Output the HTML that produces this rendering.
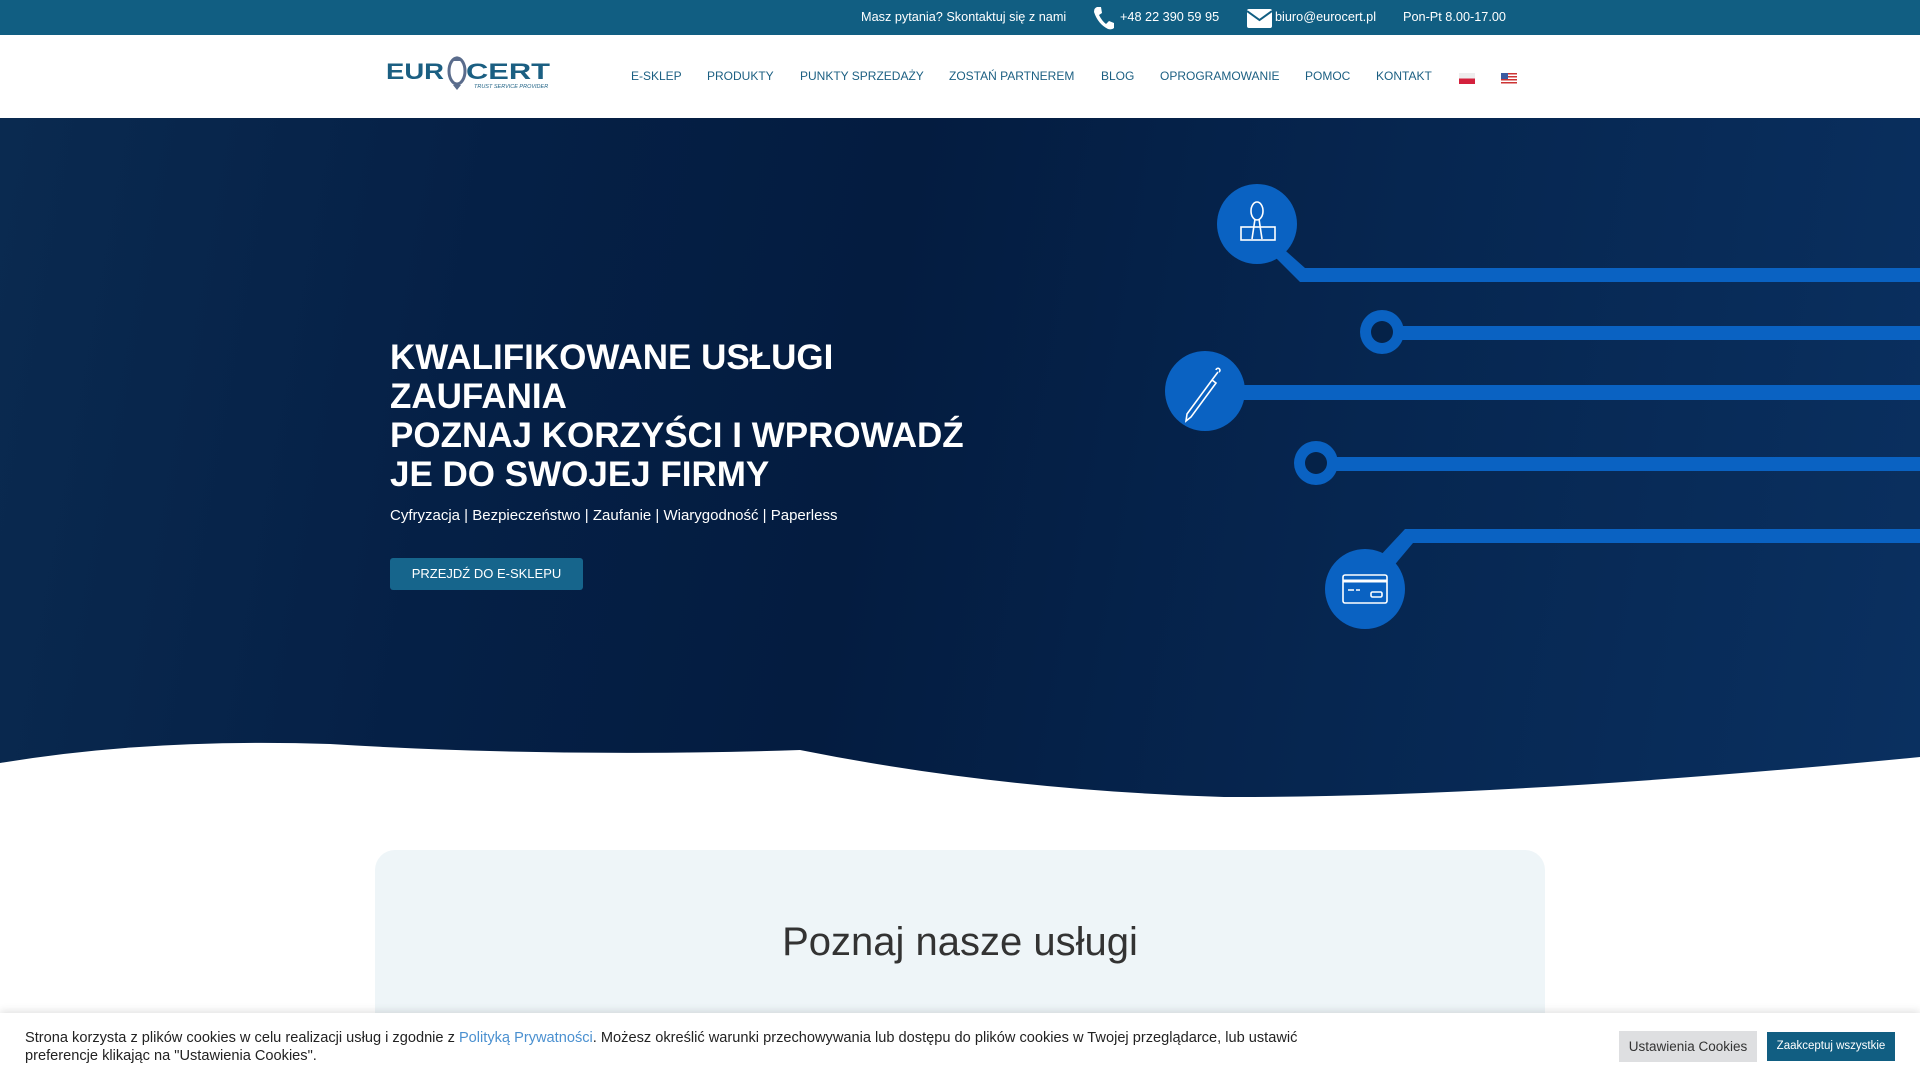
<!DOCTYPE html>
<html><head><meta charset="utf-8"><style>
*{margin:0;padding:0;box-sizing:border-box}
html,body{width:1920px;height:1080px;overflow:hidden}
body{position:relative;font-family:"Liberation Sans",Arial,sans-serif;background:#fff}
.top{position:absolute;left:0;top:0;width:1920px;height:35px;background:#115e82;color:#fff;font-size:12.7px}
.top span{position:absolute;top:10px}
.hdr{position:absolute;left:0;top:35px;width:1920px;height:83px;background:#fff}
.nav a{position:absolute;top:34px;font-size:12px;color:#1b5f82;text-decoration:none}
.hero{position:absolute;left:0;top:118px;width:1920px;height:680px;overflow:hidden;background:linear-gradient(100deg,#0a2a50 0%,#052046 25%,#041c40 45%,#062650 70%,#0a3060 100%)}
h1{position:absolute;left:390px;top:220px;width:620px;color:#fff;font-size:35px;line-height:39px;font-weight:bold}
.sub{position:absolute;left:390px;top:507px;color:#fff;font-size:15px}
.btn{position:absolute;left:390px;top:558px;width:193px;height:32px;background:#16658c;color:#fff;font-size:13px;border-radius:3px;text-align:center;line-height:32px}
.card{position:absolute;left:375px;top:850px;width:1170px;height:230px;background:#eef5f8;border-radius:20px 20px 0 0}
.card h2{text-align:center;font-weight:normal;font-size:40px;color:#333;margin-top:70px}
.cookie{position:absolute;left:0;top:1013px;width:1920px;height:67px;background:#fff;box-shadow:0 -2px 8px rgba(0,0,0,.12);font-size:14.6px;color:#222}
.cookie p{position:absolute;left:25px;top:16px;width:1330px;line-height:18px}
.b1{position:absolute;left:1619px;top:18px;width:138px;height:31px;background:#dedfe1;color:#333;font-size:13.5px;text-align:center;line-height:31px}
.b2{position:absolute;left:1767px;top:19px;width:128px;height:29px;background:#115e82;color:#fff;font-size:11.5px;text-align:center;line-height:29px}
</style></head><body>
<div class="top">
<span style="left:861px">Masz pytania? Skontaktuj się z nami</span>
<svg style="position:absolute;left:1093px;top:6px" width="22" height="24" viewBox="0 0 22 24"><path d="M4 1 L8 1 L9 7 L6 9 Q9 15 13 18 L16 15 L21 17 L21 22 Q19 24 15 23 Q5 18 1 6 Q1 2 4 1Z" fill="#fff"/></svg>
<span style="left:1120px">+48 22 390 59 95</span>
<svg style="position:absolute;left:1247px;top:9px" width="25" height="19" viewBox="0 0 25 19"><rect x="0" y="0" width="25" height="19" rx="2" fill="#fff"/><path d="M0 2 L12.5 11 L25 2" stroke="#115e82" stroke-width="2" fill="none"/></svg>
<span style="left:1275px">biuro@eurocert.pl</span>
<span style="left:1403px">Pon-Pt 8.00-17.00</span>
</div>
<div class="hdr">
<svg style="position:absolute;left:386px;top:19px" width="166" height="38" viewBox="0 0 166 38">
<g fill="#1b5f82" font-family="Liberation Sans" font-weight="bold">
<text x="0" y="25" font-size="22" textLength="58" lengthAdjust="spacingAndGlyphs">EUR</text>
<text x="80" y="25" font-size="22" textLength="84" lengthAdjust="spacingAndGlyphs">CERT</text>
</g>
<ellipse cx="71" cy="17" rx="8" ry="13" fill="none" stroke="#5a6c8c" stroke-width="3"/>
<path d="M71 2 L75 7 L67 7Z M71 36 L75 31 L67 31Z" fill="#5a6c8c"/>
<text x="88" y="34" font-size="5.5" fill="#1b5f82" font-style="italic">TRUST SERVICE PROVIDER</text>
</svg>
<div class="nav">
<a style="left:631px">E-SKLEP</a><a style="left:707px">PRODUKTY</a><a style="left:800px">PUNKTY SPRZEDAŻY</a><a style="left:949px">ZOSTAŃ PARTNEREM</a><a style="left:1101px">BLOG</a><a style="left:1160px">OPROGRAMOWANIE</a><a style="left:1305px">POMOC</a><a style="left:1376px">KONTAKT</a>
</div>
<div style="position:absolute;left:1459px;top:38px;width:16px;height:11px;background:linear-gradient(#eee 50%,#d4213d 50%)"></div>
<div style="position:absolute;left:1501px;top:38px;width:16px;height:11px;background:repeating-linear-gradient(#c33 0 1.5px,#fff 1.5px 3px)"><div style="width:7px;height:6px;background:#3b5aa0"></div></div>
</div>
<div class="hero">
<svg width="1920" height="680" style="position:absolute;left:0;top:0">
<g fill="#0a62c2" stroke="none">
<circle cx="1257" cy="106" r="40"/>
<path d="M1278 126 L1305 150 L1920 150 L1920 164 L1300 164 L1270 134Z"/>
<circle cx="1382" cy="214" r="22"/>
<rect x="1395" y="208" width="525" height="14"/>
<circle cx="1205" cy="273" r="40"/>
<rect x="1240" y="267" width="680" height="15"/>
<circle cx="1316" cy="345" r="22"/>
<rect x="1330" y="339" width="590" height="14"/>
<circle cx="1365" cy="471" r="40"/>
<path d="M1378 440 L1405 411 L1920 411 L1920 425 L1413 425 L1392 450Z"/>
</g>
<circle cx="1382" cy="214" r="11" fill="#052248"/>
<circle cx="1316" cy="345" r="11" fill="#052248"/>
<g fill="none" stroke="#fff" stroke-width="1.6">
<ellipse cx="1257" cy="93" rx="6" ry="9"/><path d="M1255 101 L1252 121 M1259 101 L1262 121"/><rect x="1241" y="109" width="34" height="13"/>
<path d="M1187 296 L1212 262 L1216 265 L1191 299 L1186 303Z M1212 262 L1218 254 M1216 252 a2 2 0 1 1 3 2"/>
<rect x="1343" y="457" width="44" height="28" rx="2"/><path d="M1343 463 H1387" stroke-width="3"/><path d="M1348 472 H1354 M1356 472 H1360"/><rect x="1371" y="474" width="11" height="5" rx="1.5"/>
</g>
<path d="M0 645 Q150 620 330 626 Q560 640 800 632 Q1000 672 1224 679 Q1500 680 1920 639 L1920 680 L0 680Z" fill="#fff"/>
</svg>
<h1>KWALIFIKOWANE USŁUGI ZAUFANIA<br>POZNAJ KORZYŚCI I WPROWADŹ JE DO SWOJEJ FIRMY</h1>
</div>
<div class="sub">Cyfryzacja | Bezpieczeństwo | Zaufanie | Wiarygodność | Paperless</div>
<div class="btn">PRZEJDŹ DO E-SKLEPU</div>
<div class="card"><h2>Poznaj nasze usługi</h2></div>
<div class="cookie">
<p>Strona korzysta z plików cookies w celu realizacji usług i zgodnie z <span style="color:#4a90d0">Polityką Prywatności</span>. Możesz określić warunki przechowywania lub dostępu do plików cookies w Twojej przeglądarce, lub ustawić preferencje klikając na "Ustawienia Cookies".</p>
<div class="b1">Ustawienia Cookies</div>
<div class="b2">Zaakceptuj wszystkie</div>
</div>
</body></html>
